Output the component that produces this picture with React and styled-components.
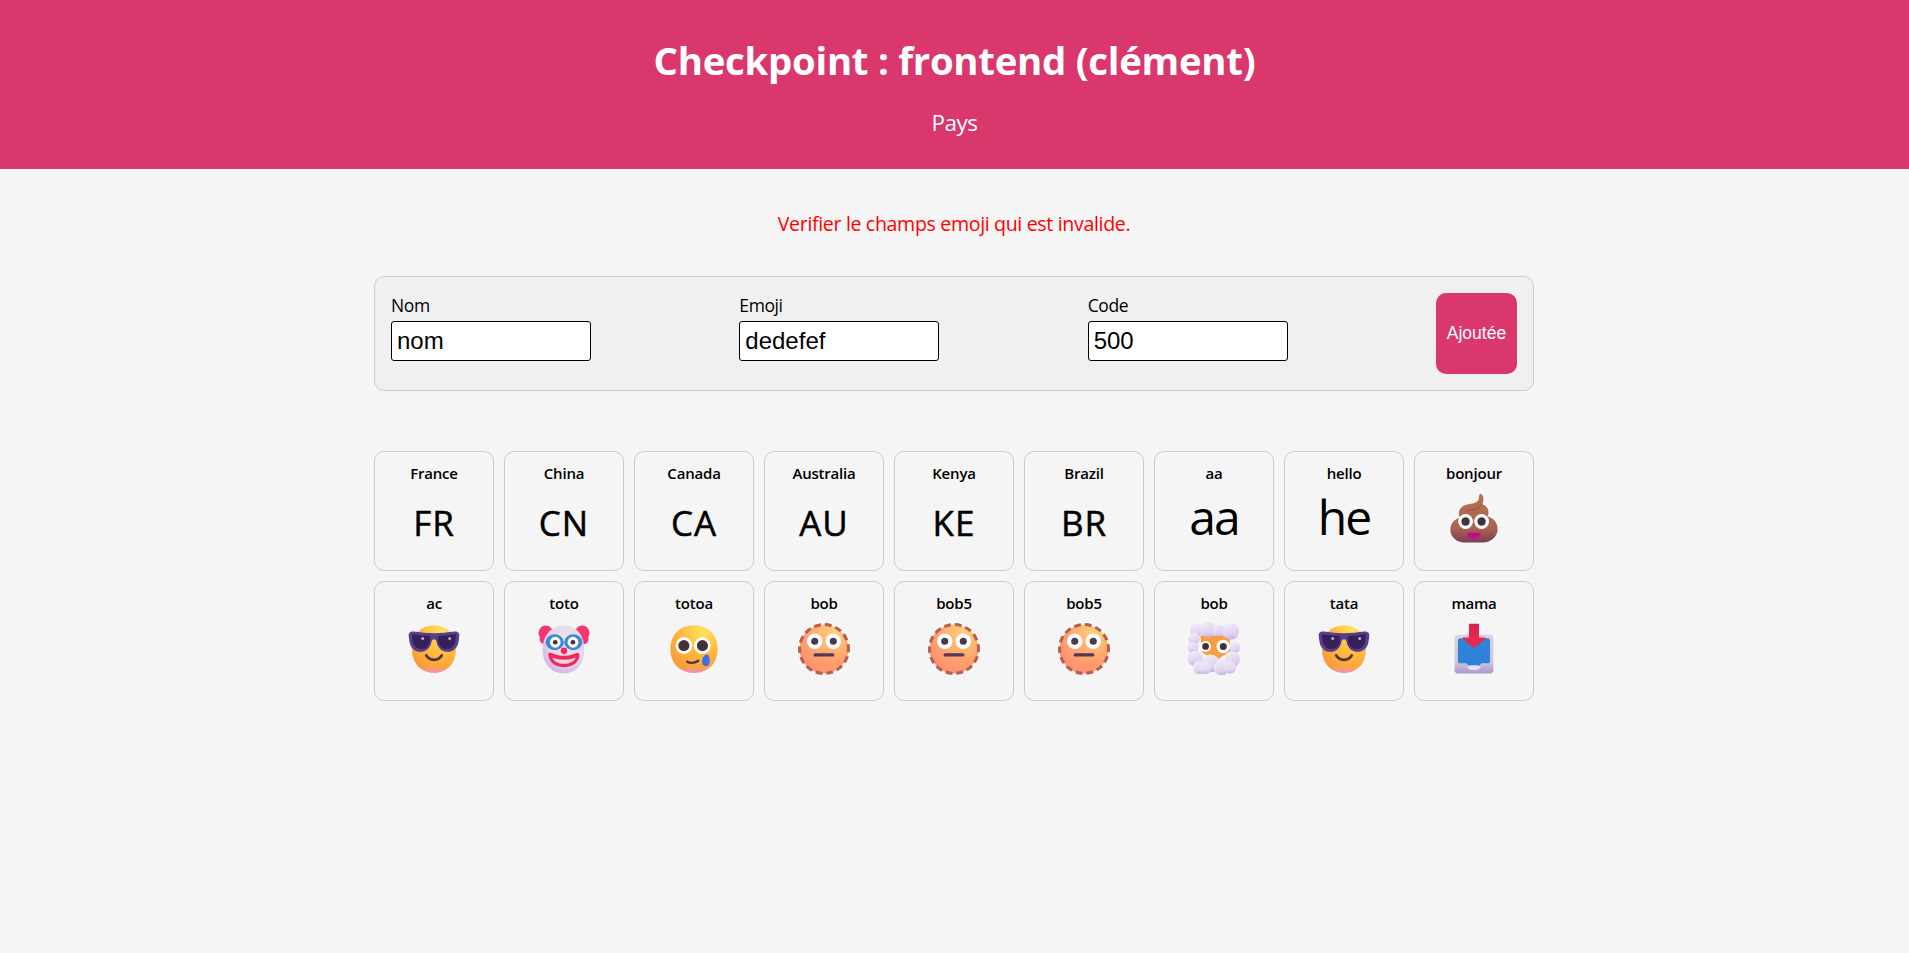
import React, { useId } from "react";
import styled, { createGlobalStyle } from "styled-components";

const Global = createGlobalStyle`
  html, body { margin: 0; padding: 0; background: #f5f5f5; }
  body { font-family: "Open Sans", "Noto Sans", sans-serif; color: #000; min-height: 953px; }
`;

const Header = styled.header`
  background: #da376c;
  color: #fff;
  height: 169px;
  box-sizing: border-box;
  padding-top: 35px;
  text-align: center;
`;
const Title = styled.h1`
  margin: 0;
  font-size: 38.4px;
  line-height: 50px;
  font-weight: 700;
  letter-spacing: -0.3px;
`;
const Subtitle = styled.p`
  margin: 23px 0 0;
  font-size: 22.5px;
  line-height: 30px;
  letter-spacing: -0.5px;
`;
const Main = styled.main`
  width: 1160px;
  margin-left: 374px;
`;
const ErrorText = styled.p`
  margin: 0;
  padding-top: 42px;
  height: 65px;
  font-size: 19.6px;
  line-height: 26px;
  color: #ff0000;
  text-align: center;
  letter-spacing: -0.35px;
`;
const Form = styled.form`
  box-sizing: border-box;
  height: 115px;
  display: flex;
  justify-content: space-between;
  align-items: stretch;
  padding: 16px;
  background: #f0f0f0;
  border: 1px solid #ccc;
  border-radius: 10px;
`;
const Field = styled.label`
  display: flex;
  flex-direction: column;
  padding-top: 1px;
  width: 202px;
  font-size: 17.5px;
  line-height: 22px;
  letter-spacing: -0.4px;
`;
const Input = styled.input`
  box-sizing: border-box;
  width: 200px;
  height: 40px;
  margin: 5px 0 0;
  padding: 1px 5px;
  background: #fff;
  border: 1px solid #000;
  border-radius: 3px;
  font-family: "Liberation Sans", Arial, sans-serif;
  font-size: 24px;
  letter-spacing: 0;
  color: #000;
  outline: none;
`;
const Button = styled.button`
  width: 81px;
  padding: 0;
  background: #da376c;
  color: #fff;
  border: 0;
  border-radius: 10px;
  font-family: "Liberation Sans", Arial, sans-serif;
  font-size: 17.5px;
`;
const Grid = styled.section`
  margin-top: 60px;
  display: grid;
  grid-template-columns: repeat(9, 120px);
  gap: 10px;
`;
const Card = styled.article`
  box-sizing: border-box;
  height: 120px;
  padding-top: 11px;
  border: 1px solid #ccc;
  border-radius: 10px;
  text-align: center;
`;
const Name = styled.div`
  font-size: 15px;
  line-height: 20px;
  font-weight: 600;
  letter-spacing: -0.2px;
`;
const Glyph = styled.div`
  height: 72px;
  display: flex;
  align-items: center;
  justify-content: center;
`;
const Text = styled.span`
  font-size: ${(p) => (p.$flag ? "35px" : "48px")};
  -webkit-text-stroke: ${(p) => (p.$flag ? "0.5px #000" : "0")};
  line-height: 70px;
  letter-spacing: ${(p) => (p.$flag ? "1px" : "-2px")};
  position: relative;
  top: ${(p) => (p.$flag ? "4px" : "-2px")};
`;
const Art = styled.svg`
  width: 54px;
  height: 54px;
  display: block;
  flex: none;
`;

const FACE = "M16 30c9.33 0 14-6.27 14-14S25.33 2 16 2 2 8.27 2 16s4.67 14 14 14Z";

function FaceFill({ id }) {
  return (
    <defs>
      <radialGradient id={`${id}a`} cx="0.7" cy="0.12" r="1">
        <stop offset="0" stopColor="#FFE35E" />
        <stop offset="0.5" stopColor="#FFB83D" />
        <stop offset="1" stopColor="#F7923A" />
      </radialGradient>
      <linearGradient id={`${id}b`} x1="0" y1="0" x2="0" y2="1">
        <stop offset="0.88" stopColor="#F59AC4" stopOpacity="0" />
        <stop offset="1" stopColor="#F08ACB" />
      </linearGradient>
    </defs>
  );
}

function Cool() {
  const id = useId().replace(/[^a-z0-9]/gi, "");
  const head = "M16 30c8.600 0 13-6.300 13-14S24.600 2 16 2 3 8.300 3 16s4.400 14 13 14Z";
  return (
    <Art viewBox="0 0 32 32">
      <FaceFill id={id} />
      <path d={head} fill={`url(#${id}a)`} />
      <path d={head} fill={`url(#${id}b)`} />
      <path d="M1 8.200C.8 6.400 2.200 5.400 3.800 5.600c4.100.5 8.200 1 12.200 1s8.100-.5 12.200-1c1.600-.2 3 .8 2.800 2.600l-.4 3.200c-.5 3.900-3.200 6.300-6.600 6.300-3.500 0-5.900-2.500-6.500-6-.2-1-.7-1.500-1.500-1.500s-1.300.5-1.500 1.500c-.6 3.500-3 6-6.500 6-3.400 0-6.100-2.400-6.600-6.300Z" fill="#5A3E8E" />
      <path d="M3.500 7.200c3.300.5 6.400.8 9.500 1 .6.100.9.600.8 1.100l-.3 2.200c-.4 2.700-2.200 4.500-4.800 4.500s-4.900-1.800-5.300-4.500l-.4-3.200c-.1-.7.1-1.100.5-1.100Z" fill="#35215A" />
      <path d="M28.500 7.200c-3.300.5-6.400.8-9.500 1-.6.100-.9.600-.8 1.100l.3 2.200c.4 2.700 2.200 4.500 4.800 4.500s4.900-1.800 5.300-4.500l.4-3.200c.1-.7-.1-1.100-.5-1.100Z" fill="#35215A" />
      <circle cx="9.300" cy="9.800" r="0.900" fill="#B9A9C9" />
      <circle cx="25.300" cy="9.800" r="0.900" fill="#B9A9C9" />
      <path d="M11.400 19.800c1 1.800 2.600 2.600 4.600 2.600s3.600-.8 4.600-2.600" fill="none" stroke="#4A3444" strokeWidth="1.600" strokeLinecap="round" />
    </Art>
  );
}

function Clown() {
  const id = useId().replace(/[^a-z0-9]/gi, "");
  return (
    <Art viewBox="0 0 32 32">
      <defs>
        <radialGradient id={`${id}a`} cx="0.6" cy="0.35" r="0.8">
          <stop offset="0" stopColor="#F0E8EC" />
          <stop offset="0.6" stopColor="#E3D3E6" />
          <stop offset="1" stopColor="#C9A3EE" />
        </radialGradient>
      </defs>
      <circle cx="5.200" cy="6.400" r="4.300" fill="#F7366F" />
      <circle cx="4.800" cy="10" r="3.300" fill="#F7366F" />
      <circle cx="26.800" cy="6.400" r="4.300" fill="#F7366F" />
      <circle cx="27.300" cy="10" r="3.300" fill="#F7366F" />
      <path d="M16 30.400c8 0 12-6.300 12-14.100S24 2 16 2 3.300 8.500 3.300 16.300 8 30.400 16 30.400Z" fill={`url(#${id}a)`} />
      <ellipse cx="10.500" cy="12" rx="5.400" ry="4.700" fill="#3C88D6" />
      <ellipse cx="21.500" cy="12" rx="5.400" ry="4.700" fill="#3C88D6" />
      <circle cx="10.800" cy="12" r="3.200" fill="#fff" />
      <circle cx="21.300" cy="12" r="3.200" fill="#fff" />
      <circle cx="10.800" cy="12" r="1.400" fill="#43303A" />
      <circle cx="21.300" cy="12" r="1.400" fill="#43303A" />
      <circle cx="16" cy="17" r="1.900" fill="#F0285F" />
      <path d="M6.900 19.300c-.4 3.500 3.100 7.500 9.100 7.500s9.500-4 9.100-7.500c-.2-1.300-1.400-1.300-2.500-.7-2 1-4.200 1.400-6.600 1.400s-4.600-.4-6.600-1.400c-1.100-.6-2.900-.6-3 .7Z" fill="#F0285F" />
      <path d="M9.100 21c2 .9 4.200 1.300 6.900 1.300s4.900-.4 6.900-1.300c-.5 2-3.400 3.800-6.900 3.800s-6.400-1.800-6.900-3.800Z" fill="#EBD8E2" />
    </Art>
  );
}

function Tears() {
  const id = useId().replace(/[^a-z0-9]/gi, "");
  return (
    <Art viewBox="0 0 32 32">
      <FaceFill id={id} />
      <path d={FACE} fill={`url(#${id}a)`} />
      <path d={FACE} fill={`url(#${id}b)`} />
      <circle cx="10" cy="14" r="4.900" fill="#fff" />
      <circle cx="21" cy="14" r="4.900" fill="#fff" />
      <circle cx="10" cy="14" r="3.300" fill="#43303A" />
      <circle cx="21" cy="14" r="3.300" fill="#43303A" />
      <path d="M12 23.500c1.500 1 4.500 1 6.500-.5" fill="none" stroke="#4A3444" strokeWidth="1.400" strokeLinecap="round" />
      <path d="M23.100 26.200c-1.600 0-2.300-1.100-2.300-2.600 0-2 .9-3.800 2-4.200.5-.2 1-.1 1.500.2.900.7 1 2.500 1 4 0 1.500-.6 2.600-2.200 2.600Z" fill="#3F6FE6" />
    </Art>
  );
}

function Dotted() {
  const id = useId().replace(/[^a-z0-9]/gi, "");
  return (
    <Art viewBox="0 0 32 32">
      <defs>
        <radialGradient id={`${id}a`} cx="0.72" cy="0.15" r="1.05">
          <stop offset="0" stopColor="#FFD078" />
          <stop offset="0.55" stopColor="#FFA26C" />
          <stop offset="0.85" stopColor="#FF8F72" />
          <stop offset="1" stopColor="#FF6F96" />
        </radialGradient>
      </defs>
      <circle cx="16" cy="16" r="14.500" fill={`url(#${id}a)`} />
      <circle cx="16" cy="16" r="14.500" fill="none" stroke="#B5604F" strokeWidth="1.800" strokeDasharray="4 2.400" strokeDashoffset="2" />
      <circle cx="10.500" cy="11.400" r="4.600" fill="#fff" />
      <circle cx="21.500" cy="11.400" r="4.600" fill="#fff" />
      <circle cx="10.500" cy="11.400" r="2.100" fill="#503745" />
      <circle cx="21.500" cy="11.400" r="2.100" fill="#503745" />
      <rect x="9.800" y="18.500" width="12.400" height="2" rx="1" fill="#503A55" />
    </Art>
  );
}

function Cloud() {
  const id = useId().replace(/[^a-z0-9]/gi, "");
  const puffs = [
    [5.500, 5, 3.800], [12.500, 4.500, 4.600], [19, 5, 3.600], [26, 5.500, 4.900], [4.200, 10, 3.500],
    [3.600, 15, 3.200], [28.400, 15, 3.300], [4.800, 21.500, 4.500], [27, 22, 4.500], [7.500, 27, 4],
    [14, 24.500, 5.300], [20.500, 27, 4.600], [25.500, 27, 3.600], [11, 27.500, 3.300],
  ];
  return (
    <Art viewBox="0 0 32 32">
      <defs>
        <linearGradient id={`${id}a`} x1="0" y1="0" x2="0" y2="1">
          <stop offset="0" stopColor="#EDE6F2" />
          <stop offset="0.7" stopColor="#DCCDEC" />
          <stop offset="1" stopColor="#BFA0E6" />
        </linearGradient>
        <linearGradient id={`${id}b`} x1="0" y1="0" x2="1" y2="1">
          <stop offset="0" stopColor="#F7FAFD" stopOpacity="0.7" />
          <stop offset="1" stopColor="#D8C6EE" stopOpacity="0.1" />
        </linearGradient>
      </defs>
      <path d="M8 8h17l1 9-9 6-8-5Z" fill="#F79E43" />
      {puffs.map(([x, y, r], i) => (
        <g key={i}>
          <circle cx={x} cy={y} r={r} fill={`url(#${id}a)`} />
          <circle cx={x} cy={y} r={r} fill={`url(#${id}b)`} />
        </g>
      ))}
      <circle cx="11" cy="14.500" r="3.200" fill="#fff" />
      <circle cx="21.500" cy="14.500" r="4" fill="#fff" />
      <circle cx="11" cy="14.500" r="2" fill="#43303A" />
      <circle cx="21.500" cy="14.500" r="2.100" fill="#43303A" />
    </Art>
  );
}

function Poop() {
  const id = useId().replace(/[^a-z0-9]/gi, "");
  return (
    <Art viewBox="0 0 32 32">
      <defs>
        <linearGradient id={`${id}a`} x1="0" y1="0" x2="0" y2="1">
          <stop offset="0" stopColor="#B5734F" />
          <stop offset="0.7" stopColor="#A9644F" />
          <stop offset="1" stopColor="#7C3F58" />
        </linearGradient>
      </defs>
      <path d="M19.500 1.200c1-.3 1.900.6 2 2 .2 1.800-.1 3-.5 4 2.300 1 3.600 2.700 3.600 4.800 0 .9-.2 1.700-.6 2.400 3.700 1.200 6 4 6 7.500 0 4.800-4.300 8-8.500 8H10.500C6 30 2 26.700 2 22.500c0-3.500 2.200-6.200 5.500-7.400-.3-.7-.5-1.500-.5-2.300 0-3.200 2.600-5.300 6-5.600 3.200-.3 5.200-1 5.800-3 .3-1.200 0-2.100.7-3Z" fill={`url(#${id}a)`} />
      <path d="M11 10.500c3 .6 7.200-.1 9.800-2.700M9.500 15c3 1 9.500.6 13.500-1.500" fill="none" stroke="#8C4E3E" strokeWidth="0.700" opacity="0.6" />
      <circle cx="11" cy="17.500" r="4.400" fill="#fff" />
      <circle cx="20.500" cy="17.500" r="4.400" fill="#fff" />
      <circle cx="11" cy="17.500" r="2.500" fill="#43303A" />
      <circle cx="20.500" cy="17.500" r="2.500" fill="#43303A" />
      <path d="M12.300 24.200h7.200c.3 0 .5.200.4.500-.3 1.600-1.800 2.800-4 2.800s-3.700-1.200-4-2.800c-.1-.3.100-.5.400-.5Z" fill="#C6098F" />
    </Art>
  );
}

function Inbox() {
  const id = useId().replace(/[^a-z0-9]/gi, "");
  return (
    <Art viewBox="0 0 32 32">
      <defs>
        <linearGradient id={`${id}a`} x1="0" y1="0" x2="0" y2="1">
          <stop offset="0" stopColor="#D9D2DF" />
          <stop offset="0.7" stopColor="#CFC7DA" />
          <stop offset="1" stopColor="#AE95D2" />
        </linearGradient>
        <linearGradient id={`${id}b`} x1="0" y1="0" x2="0" y2="1">
          <stop offset="0" stopColor="#D8224F" />
          <stop offset="1" stopColor="#EE2A4F" />
        </linearGradient>
      </defs>
      <rect x="4.500" y="7.500" width="23" height="23" rx="2" fill={`url(#${id}a)`} />
      <path d="M6.500 11c0-.8.6-1.400 1.400-1.400h16.200c.8 0 1.400.6 1.400 1.400v12.200c0 .8-.6 1.300-1.400 1.300h-3.100c-.6 0-.9.300-1.200.7-.5.800-1.800 1.300-3.800 1.300s-3.300-.5-3.800-1.300c-.3-.4-.6-.7-1.200-.7H7.900c-.8 0-1.400-.5-1.400-1.300Z" fill="#2E83D8" />
      <path d="M12 26.500c.8-.5 2-.8 4-.8s3.200.3 4 .8c-.4 1.400-2 2-4 2s-3.600-.6-4-2Z" fill="#E7E0EE" />
      <path d="M13 1h6v8.200h3.300c.4 0 .6.500.3.800L16 15.500 9.400 10c-.3-.3-.1-.8.300-.8H13Z" fill={`url(#${id}b)`} />
    </Art>
  );
}

const ICONS = { Cool, Clown, Tears, Dotted, Cloud, Poop, Inbox };

const COUNTRIES = [
  { name: "France", text: "FR", flag: true },
  { name: "China", text: "CN", flag: true },
  { name: "Canada", text: "CA", flag: true },
  { name: "Australia", text: "AU", flag: true },
  { name: "Kenya", text: "KE", flag: true },
  { name: "Brazil", text: "BR", flag: true },
  { name: "aa", text: "aa" },
  { name: "hello", text: "he" },
  { name: "bonjour", icon: "Poop" },
  { name: "ac", icon: "Cool" },
  { name: "toto", icon: "Clown" },
  { name: "totoa", icon: "Tears" },
  { name: "bob", icon: "Dotted" },
  { name: "bob5", icon: "Dotted" },
  { name: "bob5", icon: "Dotted" },
  { name: "bob", icon: "Cloud" },
  { name: "tata", icon: "Cool" },
  { name: "mama", icon: "Inbox" },
];

export default function App() {
  return (
    <>
      <Global />
      <Header>
        <Title>Checkpoint : frontend (clément)</Title>
        <Subtitle>Pays</Subtitle>
      </Header>
      <Main>
        <ErrorText>Verifier le champs emoji qui est invalide.</ErrorText>
        <Form onSubmit={(e) => e.preventDefault()}>
          <Field>Nom<Input defaultValue="nom" /></Field>
          <Field>Emoji<Input defaultValue="dedefef" /></Field>
          <Field>Code<Input defaultValue="500" /></Field>
          <Button type="submit">Ajoutée</Button>
        </Form>
        <Grid>
          {COUNTRIES.map((c, i) => {
            const Icon = c.icon && ICONS[c.icon];
            return (
              <Card key={i}>
                <Name>{c.name}</Name>
                <Glyph>{Icon ? <Icon /> : <Text $flag={c.flag}>{c.text}</Text>}</Glyph>
              </Card>
            );
          })}
        </Grid>
      </Main>
    </>
  );
}
